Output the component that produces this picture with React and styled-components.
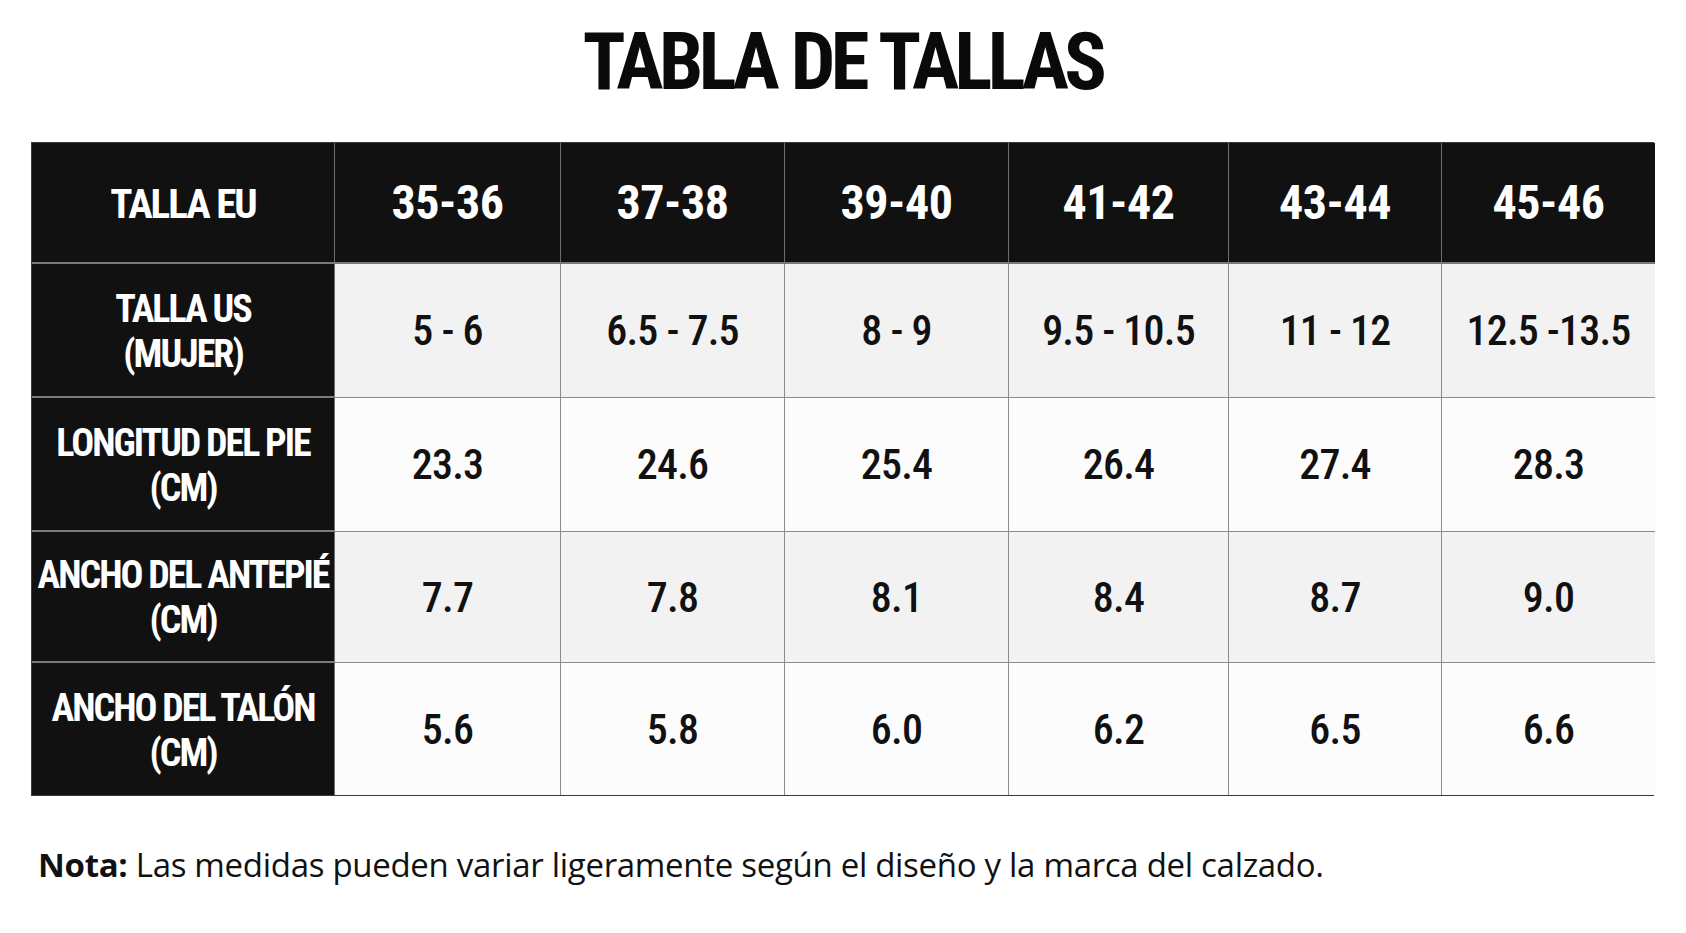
import React from "react";
import styled, { createGlobalStyle } from "styled-components";

const Global = createGlobalStyle`
  body {
    margin: 0;
    background: #ffffff;
    color: #0d0d0d;
  }
`;

const Page = styled.main`
  padding: 23px 32px 0 31px;
  font-family: "Roboto Condensed", Roboto, "Liberation Sans Narrow", sans-serif;
`;

const Title = styled.h1`
  margin: 0;
  text-align: center;
  font-size: 79px;
  line-height: 1;
  font-weight: 700;
  letter-spacing: -4.6px;
  word-spacing: 2px;
  color: #0a0a0a;
`;

const Table = styled.div`
  margin-top: 40px;
  display: grid;
  grid-template-columns: 303px 226px 224px 224px 220px 213px 213px;
  grid-template-rows: 121px 134px 134px 131px 132px;
  width: 1623px;
  border: 1.5px solid #3a3a3a;
  box-sizing: border-box;
`;

const Cell = styled.div`
  display: flex;
  align-items: center;
  justify-content: center;
  text-align: center;
  border-right: 1px solid ${(p) => (p.$dark ? "#6e6e6e" : "#8c8c8c")};
  border-bottom: ${(p) => (p.$dark ? "2px solid #7a7a7a" : "1px solid #8c8c8c")};
  background: ${(p) => (p.$dark ? "#111111" : p.$shade ? "#f2f2f2" : "#fcfcfc")};
  color: ${(p) => (p.$dark ? "#ffffff" : "#111111")};

  &:nth-child(7n) {
    border-right: none;
  }
  &:nth-last-child(-n + 7) {
    border-bottom: none;
  }
`;

const HeadValue = styled.span`
  font-size: 48px;
  font-weight: 700;
  letter-spacing: -0.5px;
`;

const Label = styled.span`
  font-size: ${(p) => (p.$big ? "41px" : "38px")};
  line-height: 45px;
  font-weight: 700;
  letter-spacing: -2px;
  white-space: nowrap;
  padding-top: 3px;
`;

const Value = styled.span`
  font-size: 42px;
  font-weight: 500;
  letter-spacing: -0.8px;
`;

const Note = styled.p`
  margin: 46px 0 0 7px;
  font-family: "Open Sans", "Noto Sans", sans-serif;
  font-size: 33px;
  color: #111111;
  letter-spacing: -0.3px;

  b {
    font-weight: 700;
  }
`;

const sizes = ["35-36", "37-38", "39-40", "41-42", "43-44", "45-46"];

const rows = [
  {
    label: ["TALLA US", "(MUJER)"],
    values: ["5 - 6", "6.5 - 7.5", "8 - 9", "9.5 - 10.5", "11 - 12", "12.5 -13.5"],
  },
  {
    label: ["LONGITUD DEL PIE", "(CM)"],
    values: ["23.3", "24.6", "25.4", "26.4", "27.4", "28.3"],
  },
  {
    label: ["ANCHO DEL ANTEPIÉ", "(CM)"],
    values: ["7.7", "7.8", "8.1", "8.4", "8.7", "9.0"],
  },
  {
    label: ["ANCHO DEL TALÓN", "(CM)"],
    values: ["5.6", "5.8", "6.0", "6.2", "6.5", "6.6"],
  },
];

export default function App() {
  return (
    <>
      <Global />
      <Page>
        <Title>TABLA DE TALLAS</Title>
        <Table>
          <Cell $dark>
            <Label $big>TALLA EU</Label>
          </Cell>
          {sizes.map((s) => (
            <Cell $dark key={s}>
              <HeadValue>{s}</HeadValue>
            </Cell>
          ))}
          {rows.map((row, i) => (
            <React.Fragment key={row.label[0]}>
              <Cell $dark>
                <Label>
                  {row.label[0]}
                  <br />
                  {row.label[1]}
                </Label>
              </Cell>
              {row.values.map((v, j) => (
                <Cell key={j} $shade={i % 2 === 0}>
                  <Value>{v}</Value>
                </Cell>
              ))}
            </React.Fragment>
          ))}
        </Table>
        <Note>
          <b>Nota:</b> Las medidas pueden variar ligeramente según el diseño y la marca del calzado.
        </Note>
      </Page>
    </>
  );
}
